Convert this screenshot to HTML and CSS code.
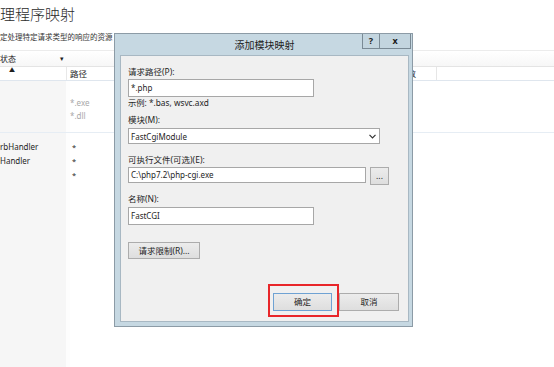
FILE: index.html
```html
<!DOCTYPE html>
<html lang="zh-CN">

<head>
    <meta charset="UTF-8">
    <meta name="viewport" content="width=device-width, initial-scale=1.0">
    <title>处理程序映射</title>
    <link rel="stylesheet" href="styles.css">
</head>

<body>
    <div class="page">
        <h1 class="page-title">理程序映射</h1>
        <p class="page-desc">定处理特定请求类型的响应的资源</p>

        <!-- filter bar -->
        <div class="toolbar">
            <div class="filter">状态<span class="caret">▾</span></div>
        </div>

        <!-- handler list -->
        <div class="grid">
            <div class="grid-head">
                <div class="col-name"><span class="sort">▲</span></div>
                <div class="col-path">路径</div>
                <div class="col-extra">参数</div>
            </div>
            <div class="grid-body">
                <div class="group">
                    <div class="row muted"><span></span><span>*.exe</span></div>
                    <div class="row muted"><span></span><span>*.dll</span></div>
                </div>
                <div class="group group-main">
                    <div class="row"><span>rbHandler</span><span class="star">*</span></div>
                    <div class="row"><span>Handler</span><span class="star">*</span></div>
                    <div class="row"><span></span><span class="star">*</span></div>
                </div>
            </div>
        </div>
    </div>

    <!-- Add module mapping dialog -->
    <div class="dialog">
        <div class="dialog-title">添加模块映射</div>
        <div class="title-buttons">
            <span class="tb-btn tb-help">?</span>
            <span class="tb-btn tb-close">x</span>
        </div>

        <div class="dialog-body">
            <label class="field-label first">请求路径(P):</label>
            <div class="text-box wide">*.php</div>
            <div class="hint">示例: *.bas, wsvc.axd</div>

            <label class="field-label gap-sm">模块(M):</label>
            <div class="select-box">
                <span>FastCgiModule</span>
                <svg width="7" height="5" viewBox="0 0 7 5">
                    <path d="M0.5 0.8 L3.5 3.8 L6.5 0.8" fill="none" stroke="#333" stroke-width="1.2" />
                </svg>
            </div>

            <label class="field-label gap-lg">可执行文件(可选)(E):</label>
            <div class="file-row">
                <div class="text-box exe">C:\php7.2\php-cgi.exe</div>
                <button class="btn browse">...</button>
            </div>

            <label class="field-label gap-md">名称(N):</label>
            <div class="text-box wide name">FastCGI</div>

            <button class="btn limits">请求限制(R)...</button>

            <div class="dialog-footer">
                <div class="highlight">
                    <button class="btn ok">确定</button>
                </div>
                <button class="btn cancel">取消</button>
            </div>
        </div>
    </div>
</body>

</html>
```

FILE: styles.css
```css
* {
    margin: 0;
    padding: 0;
    box-sizing: border-box;
}

body {
    font-family: "Noto Sans", "Noto Sans CJK SC", sans-serif;
    background: #ffffff;
    color: #1e1e1e;
    width: 554px;
    height: 367px;
    overflow: hidden;
}

/* background page */
.page-title {
    margin-top: 4px;
    font-size: 15px;
    line-height: 20px;
    font-weight: 300;
    color: #2b2b2b;
}

.page-desc {
    margin-top: 8px;
    font-size: 7.5px;
    line-height: 10px;
    color: #333;
    white-space: nowrap;
}

.toolbar {
    margin-top: 8px;
    height: 16px;
    border-top: 1px solid #ececec;
    background: linear-gradient(#ffffff, #f7f7f7);
}

.filter {
    width: 66px;
    font-size: 8px;
    line-height: 15px;
    position: relative;
}

.caret {
    position: absolute;
    left: 60px;
    font-size: 7px;
}

.grid-head {
    display: grid;
    grid-template-columns: 67px 331px 1fr;
    height: 15px;
    border-top: 1px solid #e4e4e4;
    border-bottom: 1px solid #dfe6ee;
    font-size: 8.5px;
    line-height: 13px;
}

.col-name {
    border-right: 1px solid #e8e8e8;
    position: relative;
}

.sort {
    position: absolute;
    left: 9px;
    top: -3px;
    font-size: 6px;
}

.col-path {
    padding-left: 3px;
}

.col-extra {
    width: 39px;
    border-right: 1px solid #e6e6e6;
    padding-left: 1px;
}

.grid-body {
    height: 286px;
    background: linear-gradient(to right, #f6f6f6 66px, #fdfdfd 66px, #fdfdfd 70px, #ffffff 70px);
}

.group {
    padding: 15px 0 10px;
    border-bottom: 1px solid #e6edf4;
}

.group-main {
    padding: 7px 0 0;
    border-bottom: none;
}

.row {
    display: grid;
    grid-template-columns: 70px 1fr;
    height: 14px;
    line-height: 14px;
    font-size: 8px;
}

.group .row.muted {
    height: 13px;
    line-height: 13px;
    color: #a9a9a9;
}

.star {
    padding-left: 2px;
    font-size: 7.5px;
}

/* dialog window */
.dialog {
    position: absolute;
    left: 114px;
    top: 33px;
    width: 299px;
    height: 294px;
    border: 1px solid #8c9ba6;
    background: #c6d8e2;
    padding: 0 3px 4px 5px;
    display: flex;
    flex-direction: column;
}

.dialog-title {
    height: 21px;
    line-height: 22px;
    text-align: center;
    font-size: 10px;
    color: #222;
}

.title-buttons {
    position: absolute;
    top: 0;
    right: 1px;
    display: flex;
}

.tb-btn {
    height: 15px;
    border: 1px solid #7a8a95;
    border-top: none;
    background: #c3d5df;
    font-size: 9px;
    font-weight: 700;
    line-height: 14px;
    text-align: center;
    color: #1a1a1a;
}

.tb-help {
    width: 18px;
}

.tb-close {
    width: 31px;
    border-left: none;
}

.dialog-body {
    flex: 1;
    background: #f0f0f0;
    border: 1px solid #a8b8c3;
    padding: 10px 9px 4px 7px;
    display: flex;
    flex-direction: column;
    align-items: flex-start;
    font-size: 8px;
}

.field-label {
    display: block;
    height: 12px;
    line-height: 12px;
    font-size: 8.5px;
}

.gap-sm {
    margin-top: 5px;
}

.gap-md {
    margin-top: 8px;
}

.gap-lg {
    margin-top: 10px;
}

.text-box {
    margin-top: 1px;
    height: 18px;
    background: #ffffff;
    border: 1px solid #a7a7a7;
    padding-left: 2px;
    line-height: 16px;
    font-size: 8px;
    white-space: nowrap;
}

.text-box.wide {
    width: 186px;
}

.text-box.name {
    margin-top: 2px;
}

.hint {
    height: 12px;
    line-height: 12px;
    font-size: 8.3px;
}

.select-box {
    margin-top: 2px;
    width: 252px;
    height: 16px;
    background: #ffffff;
    border: 1px solid #a7a7a7;
    padding: 0 3px 0 2px;
    display: flex;
    align-items: center;
    justify-content: space-between;
    font-size: 8px;
}

.file-row {
    margin-top: 1px;
    display: flex;
    align-items: flex-start;
    gap: 4px;
}

.text-box.exe {
    margin-top: 0;
    width: 238px;
    height: 16px;
    line-height: 14px;
}

.btn {
    font-family: "Noto Sans", "Noto Sans CJK SC", sans-serif;
    font-size: 8.5px;
    color: #1e1e1e;
    background: linear-gradient(#ececec, #dedede);
    border: 1px solid #acacac;
    height: 18px;
    line-height: 16px;
}

.browse {
    width: 19px;
    line-height: 12px;
}

.limits {
    margin-top: 17px;
    width: 72px;
    height: 17px;
}

.dialog-footer {
    margin-top: auto;
    align-self: flex-end;
    display: flex;
    align-items: flex-start;
}

.highlight {
    border: 2px solid #e8262a;
    padding: 7px 5px 4px 3px;
}

.ok {
    width: 59px;
    border-color: #6fa2d3;
}

.cancel {
    margin-top: 9px;
    width: 60px;
}
```
